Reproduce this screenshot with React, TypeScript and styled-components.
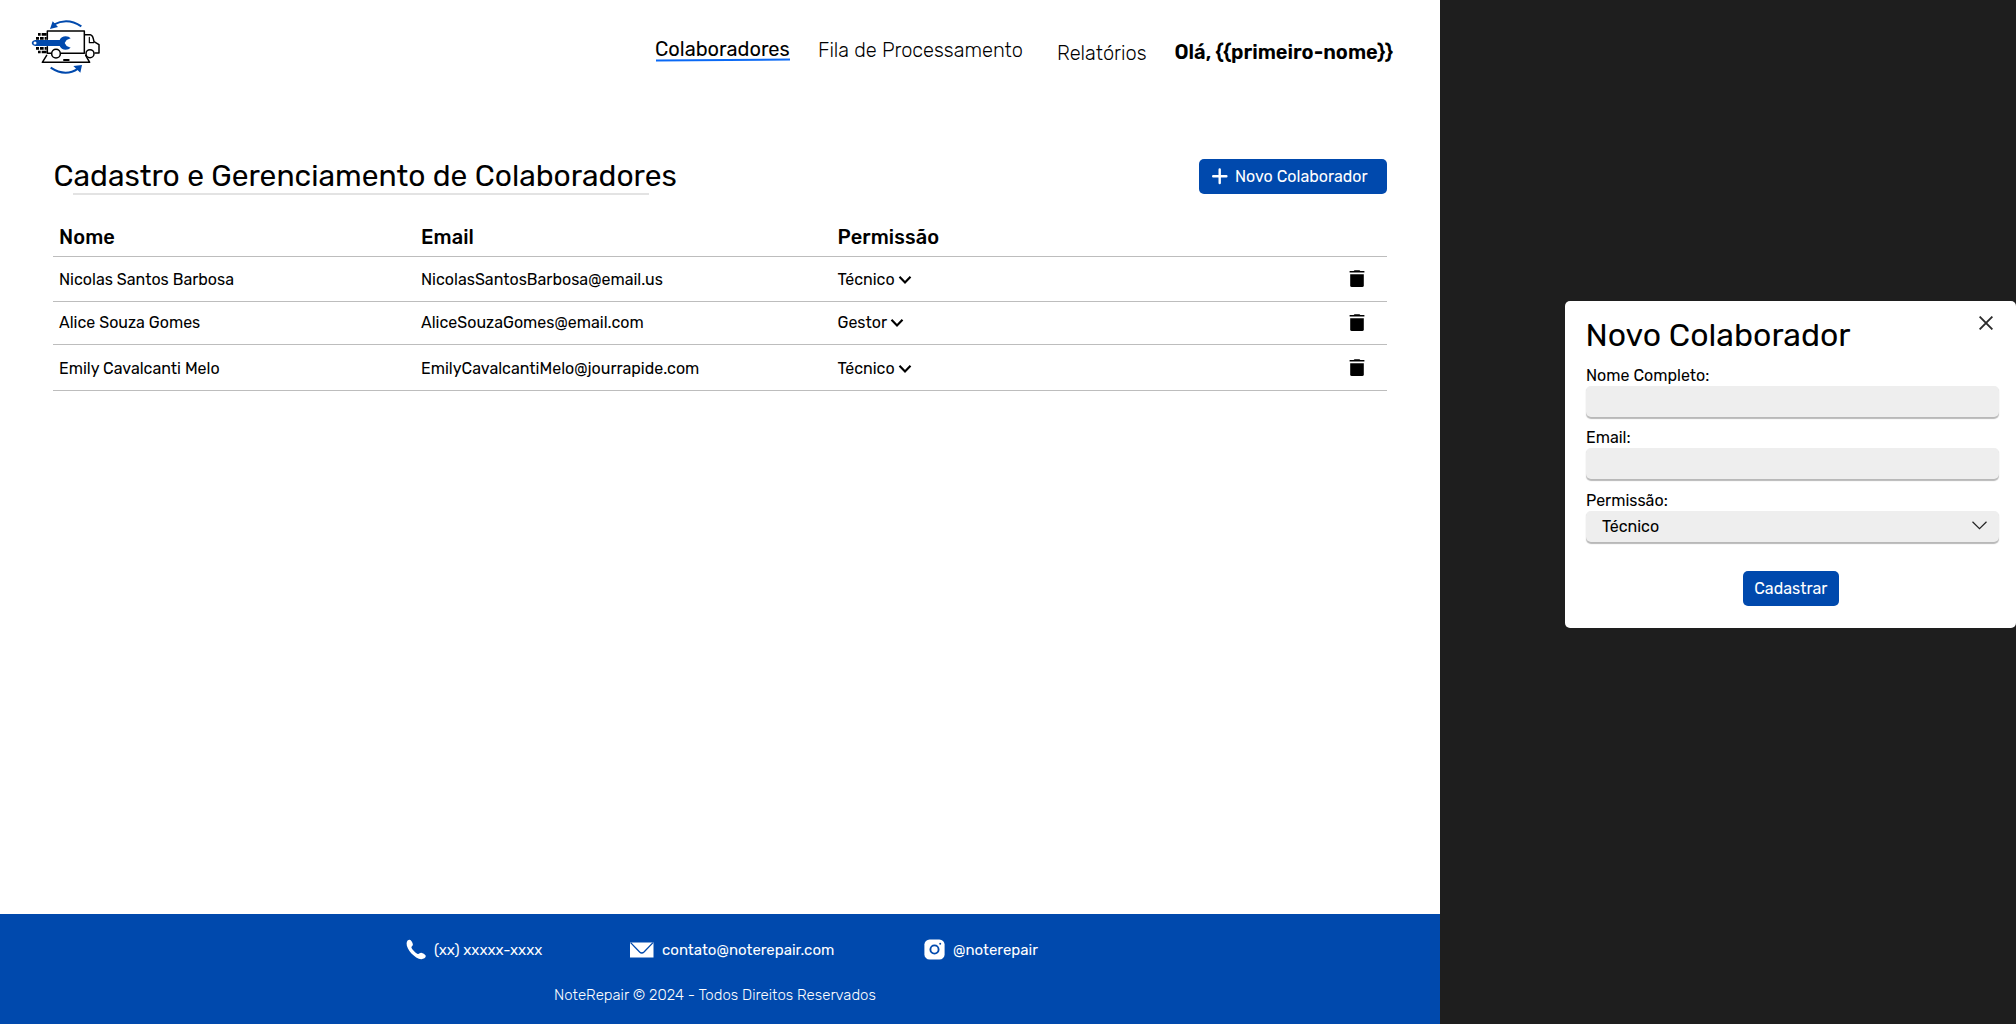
import styled, { createGlobalStyle, css } from 'styled-components';

const BLUE = '#0049ad';

const GlobalStyle = createGlobalStyle`
  *, *::before, *::after { box-sizing: border-box; }
  html, body { margin: 0; padding: 0; background: #1e1e1e; }
  body { font-family: Rubik, Inter, Roboto, sans-serif; color: #000; }
  h1, h2, p { margin: 0; font-weight: 400; }
`;

const Canvas = styled.div`
  display: flex;
  width: 2016px;
  height: 1024px;
  overflow: hidden;
  background: #1e1e1e;
`;

const Page = styled.div`
  display: flex;
  flex-direction: column;
  width: 1440px;
  height: 1024px;
  background: #fff;
`;

const Header = styled.header`
  display: flex;
  justify-content: space-between;
  height: 157px;
  padding: 10px 0 0 20px;
`;

const Nav = styled.nav`
  display: grid;
  grid-template-columns: 163px 239px 117.5px 265.5px;
  align-items: start;
  padding-top: 27px;
`;

const NavLink = styled.a<{ $drop?: number; $weight?: number }>`
  justify-self: start;
  margin-top: ${(p) => p.$drop ?? 0}px;
  font-size: 20px;
  line-height: 24px;
  font-weight: ${(p) => p.$weight ?? 300};
  white-space: nowrap;
`;

const ActiveLink = styled(NavLink)`
  display: flex;
  flex-direction: column;
  &::after {
    content: '';
    height: 2px;
    margin: -2px 0 0 1px;
    background: #0a69f5;
    transform: rotate(-0.5deg);
  }
`;

const Main = styled.main`
  flex: 1;
  padding: 0 53px;
`;

const TitleBar = styled.div`
  display: flex;
  justify-content: space-between;
  align-items: flex-start;
  height: 68px;
`;

const TitleBlock = styled.div`
  display: flex;
  flex-direction: column;
  &::after {
    content: '';
    width: 576px;
    height: 2px;
    margin-left: 20px;
    background: #e3e3e3;
  }
`;

const PageTitle = styled.h1`
  height: 36px;
  padding-left: 0.5px;
  font-size: 30px;
  line-height: 38px;
  white-space: nowrap;
`;

const Button = styled.button`
  display: flex;
  align-items: center;
  height: 35px;
  border: 0;
  border-radius: 5px;
  background: ${BLUE};
  color: #fff;
  font-family: inherit;
  font-size: 16px;
  line-height: 20px;
  white-space: nowrap;
`;

const NewButton = styled(Button)`
  width: 188px;
  margin-top: 2px;
  padding: 0 0 0 13px;
  gap: 6px;
`;

const SubmitButton = styled(Button)`
  align-self: center;
  justify-content: center;
  width: 96px;
  margin: 28px 3px 0 0;
  padding: 0;
`;

const rowGrid = css`
  display: grid;
  grid-template-columns: 362px 416.5px 1fr 38px;
  padding-left: 6px;
  border-bottom: 1px solid #bdbdbd;
`;

const TableHead = styled.div`
  ${rowGrid}
  height: 32px;
  font-size: 20px;
  line-height: 24px;
  font-weight: 500;
  letter-spacing: 0.1px;
`;

const TableRow = styled.div<{ $height: number; $shift: number }>`
  ${rowGrid}
  align-items: center;
  height: ${(p) => p.$height}px;
  font-size: 16px;
  line-height: 20px;
  & > span {
    padding-top: ${(p) => p.$shift}px;
  }
`;

const Permission = styled.span`
  display: flex;
  align-items: center;
  gap: 3px;
`;

const Footer = styled.footer`
  display: flex;
  flex-direction: column;
  height: 110px;
  padding-top: 25px;
  background: ${BLUE};
  color: #fff;
`;

const Contacts = styled.div`
  display: grid;
  grid-template-columns: 224px 294px auto;
  align-items: center;
  justify-content: start;
  height: 20px;
  padding-left: 406px;
  font-size: 15px;
  line-height: 20px;
`;

const Contact = styled.span<{ $gap: number }>`
  display: flex;
  align-items: center;
  gap: ${(p) => p.$gap}px;
`;

const Copyright = styled.p`
  margin-top: 25px;
  padding-left: 554px;
  font-size: 15px;
  line-height: 22px;
  font-weight: 300;
`;

const Side = styled.aside`
  flex: 1;
  display: flex;
  flex-direction: column;
  align-items: flex-end;
  padding-top: 301px;
`;

const Modal = styled.section`
  display: flex;
  flex-direction: column;
  width: 451px;
  height: 327px;
  padding: 0 17px 0 20.5px;
  border-radius: 5px;
  background: #fff;
`;

const ModalHead = styled.div`
  display: flex;
  justify-content: space-between;
  align-items: flex-start;
  height: 65px;
  padding: 15px 6px 0 0;
`;

const ModalTitle = styled.h2`
  font-size: 32px;
  line-height: 38px;
  white-space: nowrap;
`;

const Field = styled.label<{ $height: number }>`
  display: flex;
  flex-direction: column;
  height: ${(p) => p.$height}px;
  font-size: 16px;
  line-height: 20px;
`;

const Control = styled.span`
  display: flex;
  align-items: center;
  justify-content: space-between;
  height: 31px;
  padding: 0 12px 0 16.5px;
  border-radius: 5px;
  background: #eee;
  box-shadow: 0 1.5px 1px rgba(0, 0, 0, 0.28);
`;

const LabelText = styled.span`
  padding-left: 0.5px;
`;

const Logo = () => (
  <svg width="90" height="70" viewBox="0 0 270 210" fill="none">
    <g stroke={BLUE} strokeWidth="6">
      <path d="M184 49 Q142 21 101 44" />
      <path d="M92 173 Q136 202 174 176" />
    </g>
    <path d="M98 34 L90 57 L114 51 Z M160 168 L186 165 L181 188 Z" fill={BLUE} />
    <g stroke="#000" strokeWidth="8">
      <path d="M54 73 H62 M65 73 H80" />
      <path d="M48 85 H57 M60 85 H71 M74 85 H80" />
      <path d="M48 115 H57 M60 115 H71 M74 115 H80" />
      <path d="M54 126 H62 M65 126 H80" />
    </g>
    <g stroke="#000" strokeWidth="4.5" strokeLinejoin="round" strokeLinecap="round">
      <path d="M82 88 V63 H193 V130 H123" />
      <path d="M82 110 V130 H94" />
      <path d="M194 74 H211 Q219 75 222 95 L237 104 V129 H225" />
      <path d="M208 82 V98 H221" strokeWidth="3.5" />
      <circle cx="108" cy="131" r="13" fill="#fff" />
      <circle cx="210" cy="131" r="12" fill="#fff" />
      <path d="M80 136 L67 157 H209 L197 136" />
      <path d="M132 150 H146" strokeWidth="6" />
    </g>
    <path
      d="M45 90 H119 Q124 79 137 79 Q147 79 152 85 L140 90 L134 99 L140 108 L152 113 Q146 119 137 119 Q124 119 119 108 H45 Q36 106 35 99 Q36 92 45 90 Z"
      fill={BLUE}
    />
    <circle cx="45" cy="99" r="4.5" fill="#fff" />
  </svg>
);

const PlusIcon = () => (
  <svg width="17" height="17" viewBox="0 0 17 17" stroke="#fff" strokeWidth="2.4" strokeLinecap="round">
    <path d="M7.7 1.4 V15 M1.2 8.3 H14.4" />
  </svg>
);

const ChevronIcon = () => (
  <svg width="14" height="10" viewBox="0 0 14 10" fill="none" stroke="#000" strokeWidth="2.2">
    <path d="M1.5 1.8 L7 7.4 L12.5 1.8" />
  </svg>
);

const TrashIcon = () => (
  <svg width="16" height="18" viewBox="0 0 16 18" fill="#000">
    <path d="M5.5 0.3 H10.5 L11.3 1 H15.4 V2.6 H0.6 V1 H4.7 Z" />
    <path d="M1.2 4.2 H14.8 V15.4 Q14.8 17 13.2 17 H2.8 Q1.2 17 1.2 15.4 Z" />
  </svg>
);

const CloseIcon = () => (
  <svg width="14" height="14" viewBox="0 0 14 14" stroke="#2b2b2b" strokeWidth="1.9">
    <path d="M0.6 0.6 L13.4 13.4 M13.4 0.6 L0.6 13.4" />
  </svg>
);

const ThinChevronIcon = () => (
  <svg width="15" height="12" viewBox="0 0 15 12" fill="none" stroke="#222" strokeWidth="1.2">
    <path d="M0.5 0.8 L7.5 7.7 L14.5 0.8" />
  </svg>
);

const PhoneIcon = () => (
  <svg width="21" height="21" viewBox="0 0 21 21" fill="#fff">
    <path d="M0.6 4.2 C0.8 1.9 2.2 0.7 3.7 0.8 C5.2 1 6.7 3.9 6.9 5.4 C7 6.6 5.6 7.1 5.4 8.2 C5.4 9.8 10.1 14.7 12 14.9 C13.3 15 14 13.6 15.3 13.8 C16.8 14 19.7 15.6 19.8 17.1 C19.8 18.9 17.4 20.3 15.2 20.2 C9.1 19.7 0.2 10.4 0.6 4.2 Z" />
  </svg>
);

const MailIcon = () => (
  <svg width="24" height="16" viewBox="0 0 24 16">
    <rect x="0" y="0.5" width="23.5" height="15" fill="#fff" />
    <path d="M0.6 0.6 L9.6 10 Q11.8 12 14 10 L23 0.6" fill="none" stroke={BLUE} strokeWidth="1.3" />
  </svg>
);

const InstagramIcon = () => (
  <svg width="21" height="21" viewBox="0 0 21 21">
    <rect x="0.4" y="0.4" width="20.2" height="20.2" rx="5.2" fill="#fff" />
    <circle cx="10.5" cy="10.5" r="4.1" fill="none" stroke={BLUE} strokeWidth="1.9" />
    <circle cx="16.2" cy="4.8" r="1" fill={BLUE} />
  </svg>
);

const people = [
  { name: 'Nicolas Santos Barbosa', email: 'NicolasSantosBarbosa@email.us', role: 'Técnico', height: 45, shift: 2 },
  { name: 'Alice Souza Gomes', email: 'AliceSouzaGomes@email.com', role: 'Gestor', height: 43, shift: 0 },
  { name: 'Emily Cavalcanti Melo', email: 'EmilyCavalcantiMelo@jourrapide.com', role: 'Técnico', height: 46, shift: 3 },
];

export default function App() {
  return (
    <Canvas>
      <GlobalStyle />
      <Page>
        <Header>
          <Logo />
          <Nav>
            <ActiveLink $weight={400}>Colaboradores</ActiveLink>
            <NavLink $drop={1}>Fila de Processamento</NavLink>
            <NavLink $drop={4}>Relatórios</NavLink>
            <NavLink $drop={3} $weight={600}>{'Olá, {{primeiro-nome}}'}</NavLink>
          </Nav>
        </Header>
        <Main>
          <TitleBar>
            <TitleBlock>
              <PageTitle>Cadastro e Gerenciamento de Colaboradores</PageTitle>
            </TitleBlock>
            <NewButton>
              <PlusIcon />
              Novo Colaborador
            </NewButton>
          </TitleBar>
          <TableHead>
            <span>Nome</span>
            <span>Email</span>
            <span>Permissão</span>
          </TableHead>
          {people.map((p) => (
            <TableRow key={p.name} $height={p.height} $shift={p.shift}>
              <span>{p.name}</span>
              <span>{p.email}</span>
              <Permission>
                {p.role}
                <ChevronIcon />
              </Permission>
              <TrashIcon />
            </TableRow>
          ))}
        </Main>
        <Footer>
          <Contacts>
            <Contact $gap={7}>
              <PhoneIcon />
              (xx) xxxxx-xxxx
            </Contact>
            <Contact $gap={8}>
              <MailIcon />
              contato@noterepair.com
            </Contact>
            <Contact $gap={8}>
              <InstagramIcon />
              @noterepair
            </Contact>
          </Contacts>
          <Copyright>NoteRepair © 2024 - Todos Direitos Reservados</Copyright>
        </Footer>
      </Page>
      <Side>
        <Modal>
          <ModalHead>
            <ModalTitle>Novo Colaborador</ModalTitle>
            <CloseIcon />
          </ModalHead>
          <Field $height={62}>
            <LabelText>Nome Completo:</LabelText>
            <Control />
          </Field>
          <Field $height={63}>
            <LabelText>Email:</LabelText>
            <Control />
          </Field>
          <Field $height={52}>
            <LabelText>Permissão:</LabelText>
            <Control>
              Técnico
              <ThinChevronIcon />
            </Control>
          </Field>
          <SubmitButton>Cadastrar</SubmitButton>
        </Modal>
      </Side>
    </Canvas>
  );
}
